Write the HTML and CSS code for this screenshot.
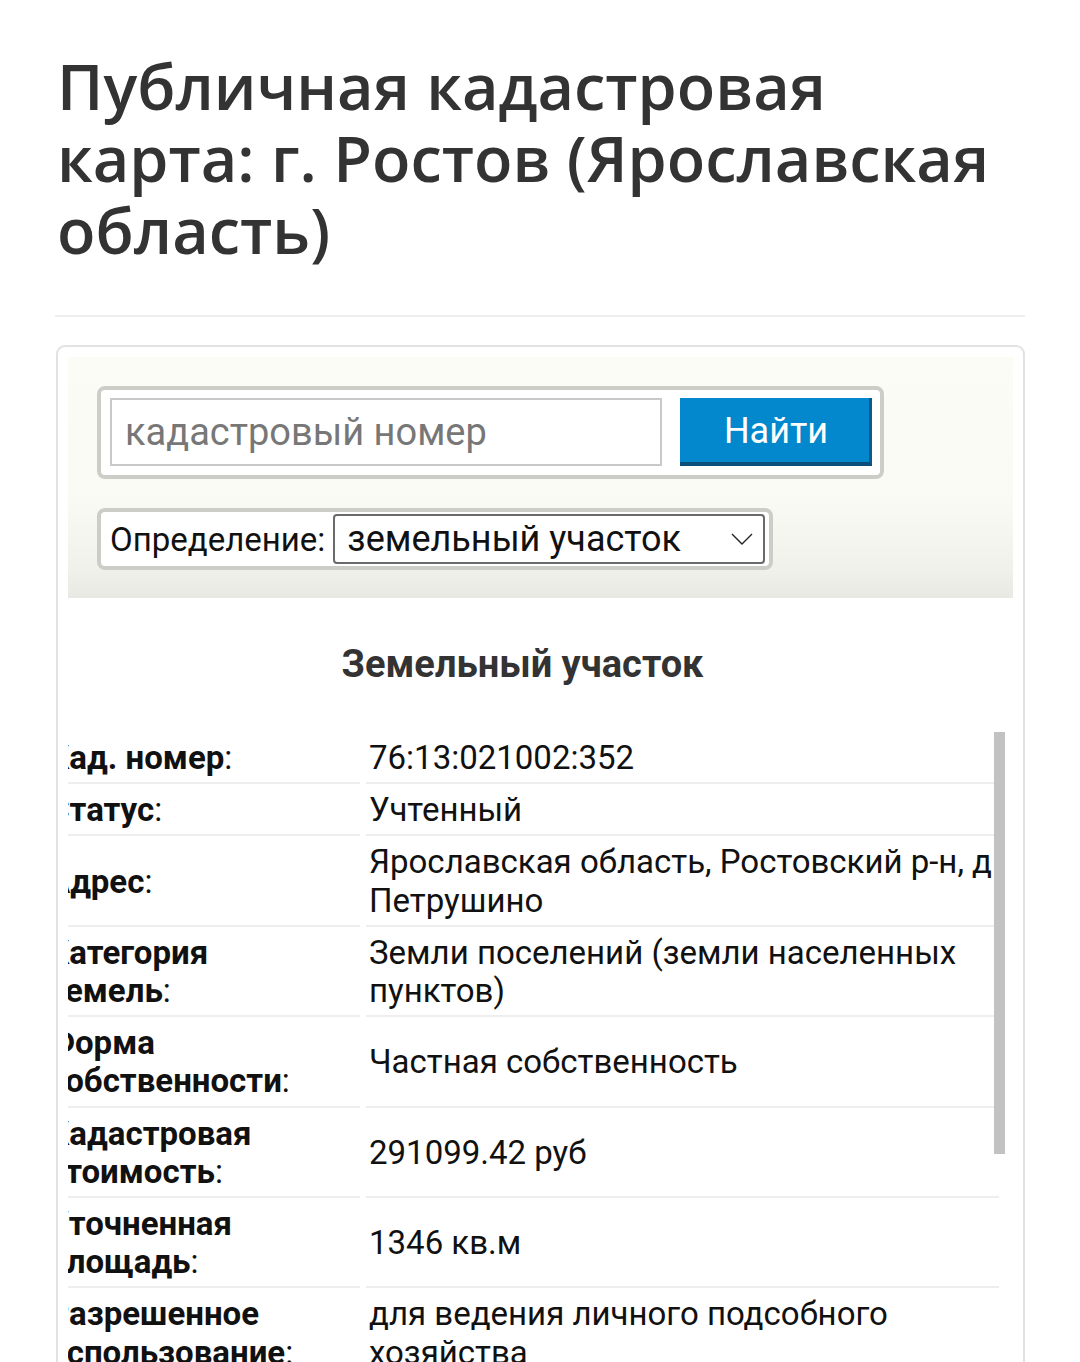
FILE: index.html
```html
<!DOCTYPE html>
<html lang="ru">
<head>
<meta charset="utf-8">
<title>Публичная кадастровая карта</title>
<link rel="stylesheet" href="styles.css">
</head>
<body>
<div class="page">
  <h1 class="title">Публичная кадастровая карта: г. Ростов (Ярославская область)</h1>
  <div class="rule"></div>
  <div class="card">
    <div class="panel">
      <div class="search">
        <div class="input">кадастровый номер</div>
        <div class="btn">Найти</div>
      </div>
      <div class="define">
        <span class="define-label">Определение:</span>
        <div class="select">
          <span>земельный участок</span>
          <svg class="chev" width="22" height="12" viewBox="0 0 22 12"><path d="M1 1 L11 11 L21 1" fill="none" stroke="#222" stroke-width="1.4"/></svg>
        </div>
      </div>
    </div>
    <h2 class="heading">Земельный участок</h2>
    <div class="tablewrap">
      <div class="table">
        <div class="k"><span><b>Кад. номер</b>:</span></div><div class="v"><span>76:13:021002:352</span></div>
        <div class="k"><span><b>Статус</b>:</span></div><div class="v"><span>Учтенный</span></div>
        <div class="k"><span><b>Адрес</b>:</span></div><div class="v"><span>Ярославская область, Ростовский р-н, д Петрушино</span></div>
        <div class="k"><span><b>Категория земель</b>:</span></div><div class="v"><span>Земли поселений (земли населенных пунктов)</span></div>
        <div class="k"><span><b>Форма собственности</b>:</span></div><div class="v"><span>Частная собственность</span></div>
        <div class="k"><span><b>Кадастровая стоимость</b>:</span></div><div class="v"><span>291099.42 руб</span></div>
        <div class="k"><span><b>Уточненная площадь</b>:</span></div><div class="v"><span>1346 кв.м</span></div>
        <div class="k"><span><b>Разрешенное использование</b>:</span></div><div class="v"><span>для ведения личного подсобного хозяйства</span></div>
      </div>
      <div class="scrollbar"></div>
    </div>
  </div>
</div>
</body>
</html>
```
FILE: styles.css
```css
html, body {
  margin: 0;
  padding: 0;
  background: #fff;
}
body {
  width: 1080px;
  height: 1362px;
  overflow: hidden;
  font-family: Roboto, "Noto Sans", sans-serif;
}
.page {
  padding: 0 55px;
}
.title {
  margin: 50px 0 0 2px;
  font-family: "Open Sans", sans-serif;
  font-weight: 600;
  font-size: 63px;
  line-height: 72px;
  color: #333;
}
.rule {
  height: 2px;
  background: #eeeeee;
  margin-top: 49px;
}
.card {
  margin-top: 28px;
  margin-left: 1px;
  border: 2px solid #e2e2e2;
  border-bottom: none;
  border-radius: 9px 9px 0 0;
  padding: 10px 10px 0 10px;
  height: 1100px;
}
.panel {
  height: 241px;
  background: linear-gradient(to bottom, #fcfcf7 0%, #fafaf4 60%, #f1f1eb 88%, #e9e9e3 100%);
  padding: 29px 0 0 29px;
  box-sizing: border-box;
}
.search {
  width: 787px;
  height: 93px;
  box-sizing: border-box;
  border: 4px solid #cdcdc8;
  border-radius: 8px;
  background: #fff;
  padding: 8px 8px 0 9px;
  display: flex;
  gap: 18px;
}
.input {
  width: 552px;
  height: 68px;
  box-sizing: border-box;
  border: 2px solid #c9c9c9;
  font-size: 38px;
  line-height: 64px;
  padding-left: 13px;
  color: #777;
}
.btn {
  width: 192px;
  height: 68px;
  box-sizing: border-box;
  background: #0388cd;
  border-bottom: 4px solid #0b4e78;
  border-right: 3px solid #0b5a88;
  color: #fff;
  font-size: 36px;
  line-height: 66px;
  text-align: center;
  padding-left: 3px;
}
.define {
  margin-top: 29px;
  width: 676px;
  height: 62px;
  box-sizing: border-box;
  border: 4px solid #cdcdc8;
  border-radius: 8px;
  background: #fff;
  padding: 0 4px 0 9px;
  display: flex;
  align-items: center;
  gap: 8px;
}
.define-label {
  font-size: 33px;
  color: #111;
}
.select {
  flex: 1;
  height: 50px;
  box-sizing: border-box;
  border: 2px solid #6a6a6a;
  border-radius: 4px;
  display: flex;
  align-items: center;
  justify-content: space-between;
  padding: 0 10px 0 12px;
  font-size: 36px;
  color: #111;
}
.chev {
  display: block;
}
.heading {
  margin: 43px 36px 0 0;
  font-size: 38px;
  line-height: 46px;
  font-weight: 700;
  color: #333;
  text-align: center;
}
.tablewrap {
  position: relative;
  margin-top: 45px;
  overflow: hidden;
  width: 940px;
}
.table {
  margin-left: -23px;
  padding-top: 2px;
  display: grid;
  grid-template-columns: 315px 633px;
  column-gap: 6px;
  row-gap: 2px;
  font-size: 33px;
  line-height: 38.2px;
  color: #111;
}
.k, .v {
  border-bottom: 2px solid #eeeeee;
  padding: 5px 0 5px 3px;
  display: flex;
  align-items: center;
}
.k {
  padding-right: 40px;
}
.k b {
  font-weight: 700;
}
.scrollbar {
  position: absolute;
  top: 0;
  left: 926px;
  width: 11px;
  height: 422px;
  background: #c2c2c2;
}
```
